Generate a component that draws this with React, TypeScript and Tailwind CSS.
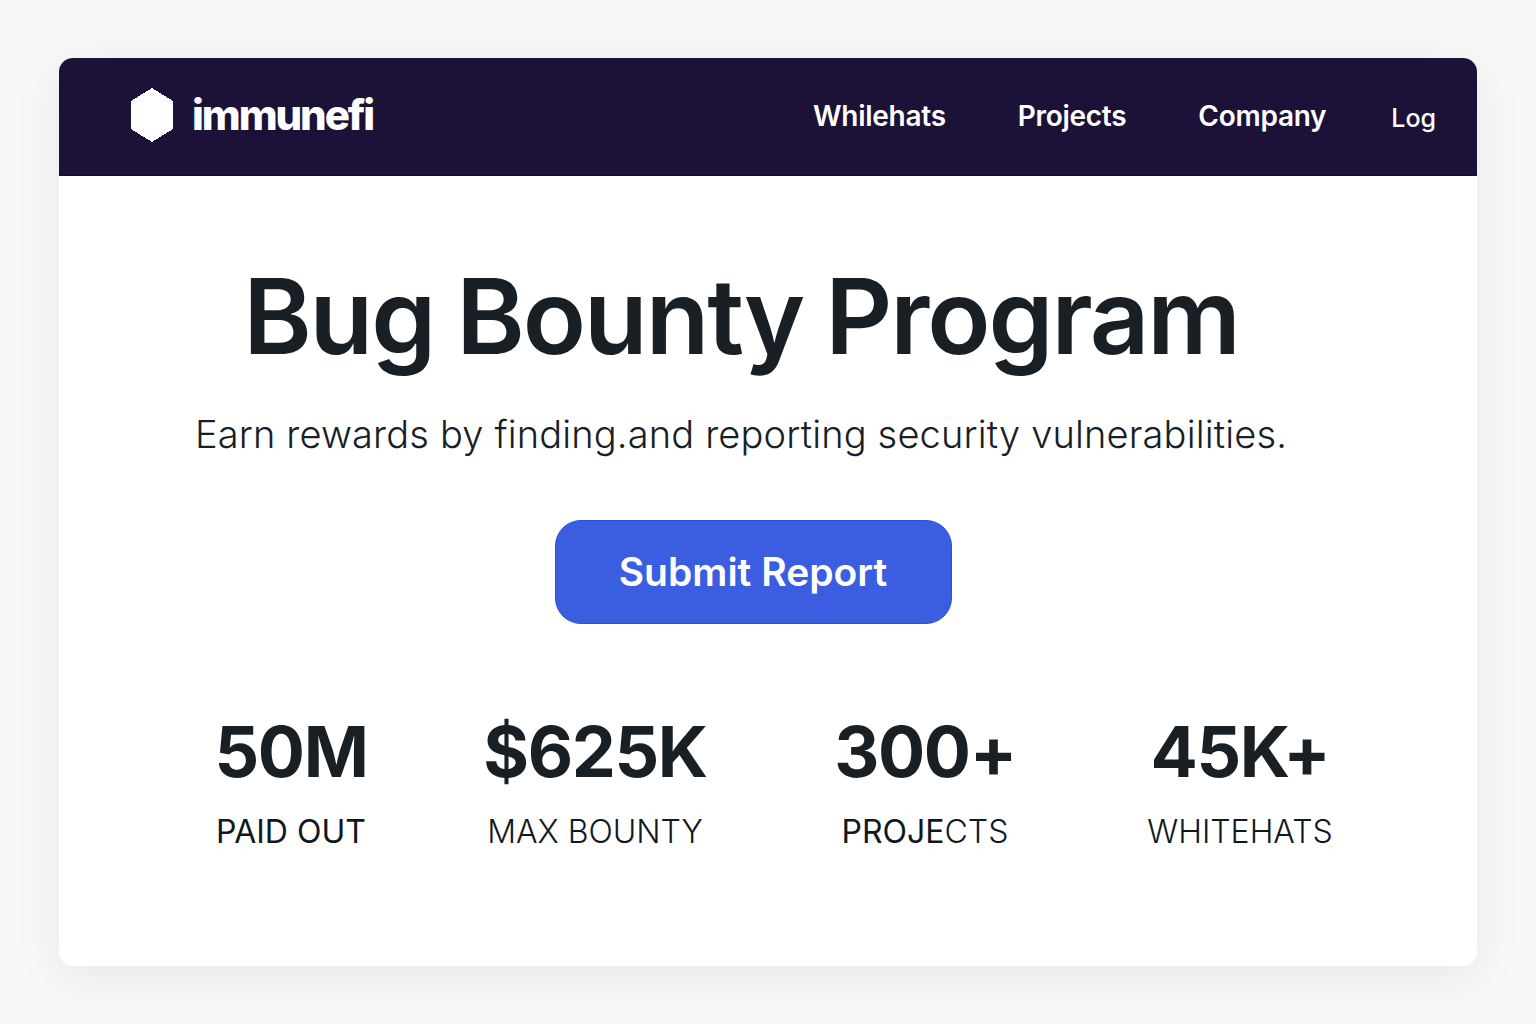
import React from 'react';

const navLinks = ['Whilehats', 'Projects', 'Company'];

const stats = [
  { value: '50M', label: <span className="font-normal">PAID OUT</span>, key: 'paid', width: 'w-[288px]' },
  { value: '$625K', label: 'MAX BOUNTY', key: 'max', width: 'w-[320px]' },
  {
    value: '300+',
    label: (
      <>
        <span className="font-normal">PROJE</span>CTS
      </>
    ),
    key: 'projects',
    width: 'w-[340px]',
  },
  { value: '45K+', label: 'WHITEHATS', key: 'whitehats', width: 'w-[290px]' },
];

export default function App() {
  return (
    <div className="min-h-[1024px] bg-[#f8f8f8] pt-[58px] pl-[59px] font-['Inter',sans-serif]">
      <div className="w-[1418px] h-[908px] bg-white rounded-[14px] overflow-hidden shadow-[0_10px_50px_rgba(0,0,0,0.07)]">
        {/* Header */}
        <header className="h-[118px] bg-[#1c1238] border-b border-[#120b28] flex items-center pl-[71px] pr-[41px]">
          <svg width="44" height="54" viewBox="0 0 44 54" shapeRendering="crispEdges" className="mr-[18px] -mt-[4px]">
            <polygon points="22,0 43,13 43,41 22,54 1,41 1,13" fill="#ffffff" />
          </svg>
          <span className="text-white text-[42px] font-extrabold tracking-[-0.05em] leading-none -mt-[4px]">immunefi</span>
          <nav className="ml-auto flex items-center text-white -mt-[2px]">
            {navLinks.map((link) => (
              <a key={link} className="text-[28px] font-semibold tracking-[-0.01em] mr-[72px] leading-none">
                {link}
              </a>
            ))}
            <a className="text-[25px] font-medium leading-none -ml-[7px] mt-[5px]">Log</a>
          </nav>
        </header>

        {/* Hero */}
        <main className="flex flex-col items-center pr-[54px]">
          <h1 className="mt-[80px] text-[104px] leading-[120px] font-semibold tracking-[-0.02em] [word-spacing:-2px] text-[#182026]">
            Bug Bounty Program
          </h1>
          <p className="mt-[35px] text-[38px] leading-[46px] font-light tracking-[0.16px] text-[#182026]">
            Earn rewards by finding.and reporting security vulnerabilities.
          </p>
          <button className="mt-[63px] ml-[24px] w-[397px] h-[104px] rounded-[26px] bg-[#3b5ee0] border border-[#2a4fe0] text-white text-[39px] font-semibold">
            Submit Report
          </button>

          {/* Stats */}
          <div className="mt-[85px] flex pl-[50px] text-center">
            {stats.map((stat) => (
              <div key={stat.key} className={stat.width}>
                <div className="text-[70px] leading-[86px] font-bold tracking-[-0.02em] text-[#182026]">{stat.value}</div>
                <div className="mt-[17px] text-[32px] leading-[40px] font-light text-[#10181e]">{stat.label}</div>
              </div>
            ))}
          </div>
        </main>
      </div>
    </div>
  );
}
